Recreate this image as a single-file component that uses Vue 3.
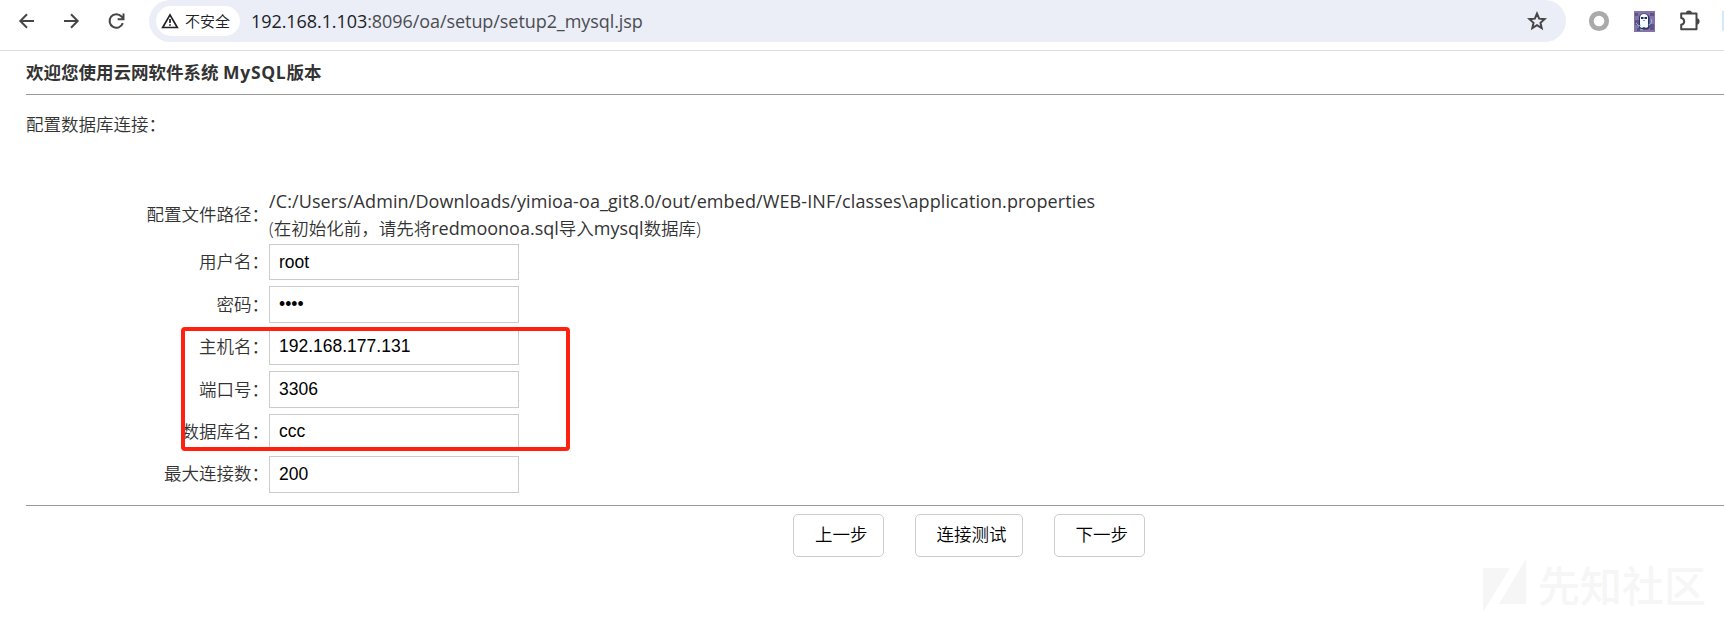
<script setup>
import { reactive } from 'vue'

const fields = reactive([
  { label: '用户名', value: 'root', type: 'text' },
  { label: '密码', value: 'root', type: 'password' },
  { label: '主机名', value: '192.168.177.131', type: 'text' },
  { label: '端口号', value: '3306', type: 'text' },
  { label: '数据库名', value: 'ccc', type: 'text' },
  { label: '最大连接数', value: '200', type: 'text' }
])
const actions = ['上一步', '连接测试', '下一步']
</script>

<template>
  <div class="window">
    <header class="toolbar">
      <nav class="nav">
        <svg width="22" height="22" viewBox="0 0 22 22"><path d="M18 11H4.8M11 4.300 4.300 11l6.700 6.700" /></svg>
        <svg width="22" height="22" viewBox="0 0 22 22"><path d="M3 11h13.200M10 4.300 16.700 11 10 17.700" /></svg>
        <svg width="22" height="22" viewBox="0 0 22 22"><path d="M16.800 13.200A6.800 6.800 0 1 1 15.500 6.500L17.500 8.500M17.500 3.500v5.800h-5.800" /></svg>
      </nav>
      <div class="omnibox">
        <div class="chip">
          <svg width="18" height="16" viewBox="0 0 18 16"><path d="M9 1.900 16.300 14.500H1.700Z" /><path d="M9 6v4M9 11.200v1.600" /></svg>
          <span>不安全</span>
        </div>
        <div class="url"><span class="host">192.168.1.103</span>:8096/oa/setup/setup2_mysql.jsp</div>
        <svg class="star" width="20" height="20" viewBox="0 0 20 20"><path d="m10 2.600 2.150 5.050 5.450.5-4.120 3.620 1.220 5.330L10 14.250 5.300 17.100l1.220-5.330L2.400 8.150l5.450-.5Z" /></svg>
      </div>
      <div class="extensions">
        <svg class="ring" width="22" height="22" viewBox="0 0 22 22"><circle cx="11" cy="11" r="7.700" /></svg>
        <svg class="ghost" width="21" height="21" viewBox="0 0 21 21">
          <path fill="#8573a6" d="M0 0h21v21H0z" />
          <path fill="#62508c" d="M1 2h3v3H1zM16 2h4v3h-4zM1 9h4v5H1zM16 13h4v6h-4zM3 17h3v3H3z" />
          <path fill="#2e3563" d="M5 17V7q0-4.500 5-4.500T15.500 7v10l-2 1.500H7z" />
          <path fill="#f5fbff" d="M6 16V7q0-4 4-4t4 4v9l-2 1-2-1-2 1-2-1z" />
          <path fill="#172b61" d="M7 6h2.500v2H7zM10.500 6H13v2h-2.500zM9.500 9h1v1h-1z" />
          <path stroke="#70c5df" fill="none" d="m2 12 3 3 2-1M14.500 14l3-2V8M6 18l3 1" />
        </svg>
        <svg class="puzzle" width="24" height="24" viewBox="0 0 24 24">
          <path d="M4.200 4.500h15.300v15.800H4.200v-4.600q3-.6 3-3.300t-3-3.300Z" />
          <path class="knobs" d="M8.800 4.500a3.100 3.100 0 0 1 6.200 0ZM19.500 9.300a3.100 3.100 0 0 1 0 6.200Z" />
        </svg>
      </div>
      <i class="edge"></i>
    </header>

    <main class="page">
      <h1>欢迎您使用云网软件系统 <span>MySQL</span>版本</h1>
      <p class="intro">配置数据库连接：</p>

      <form class="settings" @submit.prevent>
        <div class="row path-row">
          <label>配置文件路径：</label>
          <div class="path">
            <div class="path-name">/C:/Users/Admin/Downloads/yimioa-oa_git8.0/out/embed/WEB-INF/classes\application.properties</div>
            <div class="path-note">(在初始化前，请先将<span>redmoonoa.sql</span>导入<span>mysql</span>数据库)</div>
          </div>
        </div>
        <div v-for="field in fields" :key="field.label" class="row">
          <label>{{ field.label }}：</label>
          <input v-model="field.value" :type="field.type" />
        </div>
        <div class="marker"></div>
      </form>

      <div class="actions">
        <button v-for="action in actions" :key="action" type="button">{{ action }}</button>
      </div>
    </main>

    <div class="watermark">
      <svg width="44" height="54" viewBox="0 0 44 54"><path d="M0 9h27L0 53ZM43 0v45H16Z" /></svg>
      <span>先知社区</span>
    </div>
  </div>
</template>

<style>
body {
  margin: 0;
  overflow: hidden;
}
</style>

<style scoped>
.window {
  position: relative;
  box-sizing: border-box;
  width: 1724px;
  height: 617px;
  overflow: hidden;
  background: #fff;
  color: #333;
  font: 350 17.5px/27px "Open Sans", "Noto Sans CJK SC", sans-serif;
}
.toolbar {
  display: flex;
  box-sizing: border-box;
  height: 51px;
  border-bottom: 1px solid #dcdddf;
}
svg {
  display: block;
  flex: none;
}
.nav {
  display: flex;
  gap: 23px;
  width: 133px;
  padding: 10px 0 0 16px;
}
.nav svg, .chip svg, .star, .puzzle {
  fill: none;
  stroke: #464646;
  stroke-width: 2;
}
.omnibox {
  display: flex;
  align-items: center;
  box-sizing: border-box;
  width: 1417px;
  height: 42px;
  padding: 0 19px 0 7px;
  border-radius: 21px;
  background: #ebeef7;
}
.chip {
  display: flex;
  align-items: center;
  gap: 6px;
  box-sizing: border-box;
  width: 84px;
  height: 30px;
  padding-left: 5px;
  border-radius: 15px;
  background: #fff;
  color: #202124;
  font-size: 15px;
}
.chip svg {
  stroke: #202124;
  stroke-width: 1.7;
}
.url {
  flex: 1;
  margin-left: 11px;
  font-size: 18px;
  font-weight: 400;
  letter-spacing: -0.07px;
  color: #4a4c50;
  white-space: nowrap;
}
.host {
  color: #202124;
}
.extensions {
  display: flex;
  padding: 10px 0 0 22px;
}
.ring {
  fill: none;
  stroke: #aaa;
  stroke-width: 4.8;
}
.ghost {
  margin: 1px 0 0 24px;
}
.puzzle {
  margin: -1px 0 0 22px;
  stroke-linejoin: round;
}
.knobs {
  fill: #464646;
  stroke: none;
}
.edge {
  width: 2px;
  height: 20px;
  margin: 11px 0 0 auto;
  background: #d3e8fb;
}
.page {
  padding-left: 26px;
}
h1 {
  box-sizing: border-box;
  height: 44px;
  margin: 0;
  padding-top: 8px;
  border-bottom: 1px solid #999;
  font-size: 17.5px;
  line-height: 27px;
}
h1 span {
  letter-spacing: 0.7px;
}
.intro {
  height: 28px;
  margin: 16px 0 0;
}
.settings {
  position: relative;
  box-sizing: border-box;
  height: 367px;
  padding-top: 48.75px;
  border-bottom: 1px solid #999;
}
.row {
  display: flex;
  height: 42.45px;
}
label {
  box-sizing: border-box;
  width: 243px;
  padding-top: 4.5px;
  text-align: right;
  white-space: nowrap;
}
.path-row {
  height: 56px;
}
.path-row label {
  padding-top: 13px;
}
.path {
  white-space: nowrap;
}
.path-name {
  font-size: 18px;
  font-weight: 400;
  letter-spacing: 0.1px;
}
.path-note span {
  font-size: 18px;
  font-weight: 400;
}
input {
  box-sizing: border-box;
  width: 250px;
  height: 36.6px;
  padding: 0 9px;
  border: 1px solid #ccc;
  outline: 0;
  background: #fff;
  color: #000;
  font: 17.5px "Liberation Sans", sans-serif;
}
.marker {
  position: absolute;
  left: 155px;
  top: 188px;
  box-sizing: border-box;
  width: 389px;
  height: 124px;
  border: 4px solid #ff2010;
  border-radius: 4px;
}
.actions {
  display: flex;
  gap: 30.5px;
  padding: 8px 0 0 767px;
}
button {
  height: 43px;
  padding: 0 15.5px 4px 21px;
  border: 1px solid #ccc;
  border-radius: 5px;
  background: #fff;
  color: #000;
  font: 350 17.5px/27px "Noto Sans CJK SC", sans-serif;
}
.watermark {
  position: absolute;
  left: 1483px;
  top: 559px;
  display: flex;
  gap: 11px;
  color: #f6f6f6;
  font: 500 42px/50px "Noto Sans CJK SC", sans-serif;
  white-space: nowrap;
}
.watermark svg {
  fill: #f6f6f6;
}
</style>
